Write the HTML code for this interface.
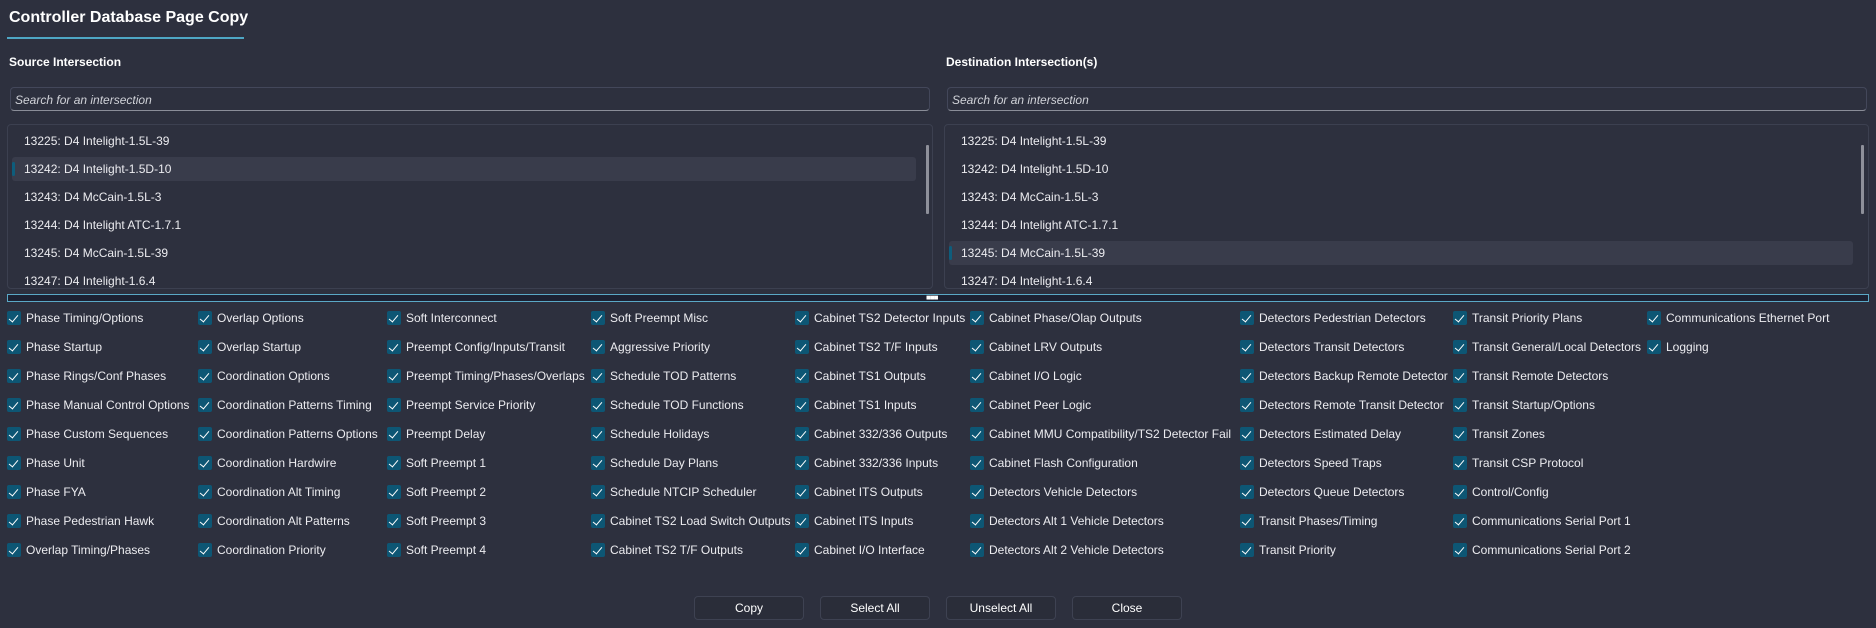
<!DOCTYPE html>
<html><head><meta charset="utf-8"><style>
*{box-sizing:border-box;margin:0;padding:0}
body{width:1876px;height:628px;background:#2d303e;font-family:"Liberation Sans",sans-serif;color:#ececf0;position:relative;overflow:hidden}
.abs{position:absolute}
.title{left:9px;top:9px;font-size:16px;font-weight:bold;color:#fff}
.uline{left:7px;top:37px;width:237px;height:2px;background:#4ea6c4}
.lbl{font-size:12px;font-weight:bold;color:#fff}
.search{height:24px;border:1px solid #43475a;border-bottom:1px solid #8a8d98;border-radius:4px;font-size:12px;font-style:italic;color:#d0d2d8;padding:5px 4px}
.list{top:124px;height:165px;border:1px solid #3c4050;border-radius:4px;overflow:hidden}
.item{position:absolute;left:4px;height:24px;font-size:12px;line-height:24px;padding-left:12px;border-radius:3px}
.sel{background:#393c4b}
.sel::before{content:"";position:absolute;left:0;top:5px;width:3px;height:14px;background:#0e5d7c;border-radius:2px}
.sb{position:absolute;width:3px;top:20px;height:69px;background:#8e909a;border-radius:1px}
.split{left:7px;top:294px;width:1862px;height:8px;border:1px solid #5aa8c6;background:#1c2132}
.dots{left:926px;top:295px;font-size:8px;color:#fff;letter-spacing:-1px;line-height:6px}
.cb{position:absolute;font-size:12px;line-height:14px;white-space:nowrap;padding-left:19px}
.cb::before{content:"";position:absolute;left:0;top:0;width:14px;height:14px;background:#0d5674;border-radius:2px}
.cb::after{content:"";position:absolute;left:4px;top:2px;width:4px;height:8px;border:solid #fff;border-width:0 1.3px 1.3px 0;transform:rotate(40deg)}
.btn{top:596px;width:110px;height:24px;border:1px solid #3e4252;border-radius:4px;background:#2a2d39;font-size:12px;text-align:center;line-height:22px;color:#fff}
</style></head><body>
<div class="abs title">Controller Database Page Copy</div>
<div class="abs uline"></div>
<div class="abs lbl" style="left:9px;top:55px">Source Intersection</div>
<div class="abs lbl" style="left:946px;top:55px">Destination Intersection(s)</div>
<div class="abs search" style="left:10px;top:87px;width:920px">Search for an intersection</div>
<div class="abs search" style="left:947px;top:87px;width:920px">Search for an intersection</div>
<div class="abs list" style="left:7px;width:926px">
<div class="item" style="top:4px;width:904px">13225: D4 Intelight-1.5L-39</div>
<div class="item sel" style="top:32px;width:904px">13242: D4 Intelight-1.5D-10</div>
<div class="item" style="top:60px">13243: D4 McCain-1.5L-3</div>
<div class="item" style="top:88px">13244: D4 Intelight ATC-1.7.1</div>
<div class="item" style="top:116px">13245: D4 McCain-1.5L-39</div>
<div class="item" style="top:144px">13247: D4 Intelight-1.6.4</div>
<div class="sb" style="left:918px"></div>
</div>
<div class="abs list" style="left:944px;width:925px">
<div class="item" style="top:4px">13225: D4 Intelight-1.5L-39</div>
<div class="item" style="top:32px">13242: D4 Intelight-1.5D-10</div>
<div class="item" style="top:60px">13243: D4 McCain-1.5L-3</div>
<div class="item" style="top:88px">13244: D4 Intelight ATC-1.7.1</div>
<div class="item sel" style="top:116px;width:904px">13245: D4 McCain-1.5L-39</div>
<div class="item" style="top:144px">13247: D4 Intelight-1.6.4</div>
<div class="sb" style="left:916px"></div>
</div>
<div class="abs split"></div>
<div class="abs dots">■■■</div>

<div class="cb" style="left:7px;top:311px">Phase Timing/Options</div>
<div class="cb" style="left:7px;top:340px">Phase Startup</div>
<div class="cb" style="left:7px;top:369px">Phase Rings/Conf Phases</div>
<div class="cb" style="left:7px;top:398px">Phase Manual Control Options</div>
<div class="cb" style="left:7px;top:427px">Phase Custom Sequences</div>
<div class="cb" style="left:7px;top:456px">Phase Unit</div>
<div class="cb" style="left:7px;top:485px">Phase FYA</div>
<div class="cb" style="left:7px;top:514px">Phase Pedestrian Hawk</div>
<div class="cb" style="left:7px;top:543px">Overlap Timing/Phases</div>

<div class="cb" style="left:198px;top:311px">Overlap Options</div>
<div class="cb" style="left:198px;top:340px">Overlap Startup</div>
<div class="cb" style="left:198px;top:369px">Coordination Options</div>
<div class="cb" style="left:198px;top:398px">Coordination Patterns Timing</div>
<div class="cb" style="left:198px;top:427px">Coordination Patterns Options</div>
<div class="cb" style="left:198px;top:456px">Coordination Hardwire</div>
<div class="cb" style="left:198px;top:485px">Coordination Alt Timing</div>
<div class="cb" style="left:198px;top:514px">Coordination Alt Patterns</div>
<div class="cb" style="left:198px;top:543px">Coordination Priority</div>

<div class="cb" style="left:387px;top:311px">Soft Interconnect</div>
<div class="cb" style="left:387px;top:340px">Preempt Config/Inputs/Transit</div>
<div class="cb" style="left:387px;top:369px">Preempt Timing/Phases/Overlaps</div>
<div class="cb" style="left:387px;top:398px">Preempt Service Priority</div>
<div class="cb" style="left:387px;top:427px">Preempt Delay</div>
<div class="cb" style="left:387px;top:456px">Soft Preempt 1</div>
<div class="cb" style="left:387px;top:485px">Soft Preempt 2</div>
<div class="cb" style="left:387px;top:514px">Soft Preempt 3</div>
<div class="cb" style="left:387px;top:543px">Soft Preempt 4</div>

<div class="cb" style="left:591px;top:311px">Soft Preempt Misc</div>
<div class="cb" style="left:591px;top:340px">Aggressive Priority</div>
<div class="cb" style="left:591px;top:369px">Schedule TOD Patterns</div>
<div class="cb" style="left:591px;top:398px">Schedule TOD Functions</div>
<div class="cb" style="left:591px;top:427px">Schedule Holidays</div>
<div class="cb" style="left:591px;top:456px">Schedule Day Plans</div>
<div class="cb" style="left:591px;top:485px">Schedule NTCIP Scheduler</div>
<div class="cb" style="left:591px;top:514px">Cabinet TS2 Load Switch Outputs</div>
<div class="cb" style="left:591px;top:543px">Cabinet TS2 T/F Outputs</div>

<div class="cb" style="left:795px;top:311px">Cabinet TS2 Detector Inputs</div>
<div class="cb" style="left:795px;top:340px">Cabinet TS2 T/F Inputs</div>
<div class="cb" style="left:795px;top:369px">Cabinet TS1 Outputs</div>
<div class="cb" style="left:795px;top:398px">Cabinet TS1 Inputs</div>
<div class="cb" style="left:795px;top:427px">Cabinet 332/336 Outputs</div>
<div class="cb" style="left:795px;top:456px">Cabinet 332/336 Inputs</div>
<div class="cb" style="left:795px;top:485px">Cabinet ITS Outputs</div>
<div class="cb" style="left:795px;top:514px">Cabinet ITS Inputs</div>
<div class="cb" style="left:795px;top:543px">Cabinet I/O Interface</div>

<div class="cb" style="left:970px;top:311px">Cabinet Phase/Olap Outputs</div>
<div class="cb" style="left:970px;top:340px">Cabinet LRV Outputs</div>
<div class="cb" style="left:970px;top:369px">Cabinet I/O Logic</div>
<div class="cb" style="left:970px;top:398px">Cabinet Peer Logic</div>
<div class="cb" style="left:970px;top:427px">Cabinet MMU Compatibility/TS2 Detector Fail</div>
<div class="cb" style="left:970px;top:456px">Cabinet Flash Configuration</div>
<div class="cb" style="left:970px;top:485px">Detectors Vehicle Detectors</div>
<div class="cb" style="left:970px;top:514px">Detectors Alt 1 Vehicle Detectors</div>
<div class="cb" style="left:970px;top:543px">Detectors Alt 2 Vehicle Detectors</div>

<div class="cb" style="left:1240px;top:311px">Detectors Pedestrian Detectors</div>
<div class="cb" style="left:1240px;top:340px">Detectors Transit Detectors</div>
<div class="cb" style="left:1240px;top:369px">Detectors Backup Remote Detector</div>
<div class="cb" style="left:1240px;top:398px">Detectors Remote Transit Detector</div>
<div class="cb" style="left:1240px;top:427px">Detectors Estimated Delay</div>
<div class="cb" style="left:1240px;top:456px">Detectors Speed Traps</div>
<div class="cb" style="left:1240px;top:485px">Detectors Queue Detectors</div>
<div class="cb" style="left:1240px;top:514px">Transit Phases/Timing</div>
<div class="cb" style="left:1240px;top:543px">Transit Priority</div>

<div class="cb" style="left:1453px;top:311px">Transit Priority Plans</div>
<div class="cb" style="left:1453px;top:340px">Transit General/Local Detectors</div>
<div class="cb" style="left:1453px;top:369px">Transit Remote Detectors</div>
<div class="cb" style="left:1453px;top:398px">Transit Startup/Options</div>
<div class="cb" style="left:1453px;top:427px">Transit Zones</div>
<div class="cb" style="left:1453px;top:456px">Transit CSP Protocol</div>
<div class="cb" style="left:1453px;top:485px">Control/Config</div>
<div class="cb" style="left:1453px;top:514px">Communications Serial Port 1</div>
<div class="cb" style="left:1453px;top:543px">Communications Serial Port 2</div>

<div class="cb" style="left:1647px;top:311px">Communications Ethernet Port</div>
<div class="cb" style="left:1647px;top:340px">Logging</div>

<div class="abs btn" style="left:694px">Copy</div>
<div class="abs btn" style="left:820px">Select All</div>
<div class="abs btn" style="left:946px">Unselect All</div>
<div class="abs btn" style="left:1072px">Close</div>
</body></html>
